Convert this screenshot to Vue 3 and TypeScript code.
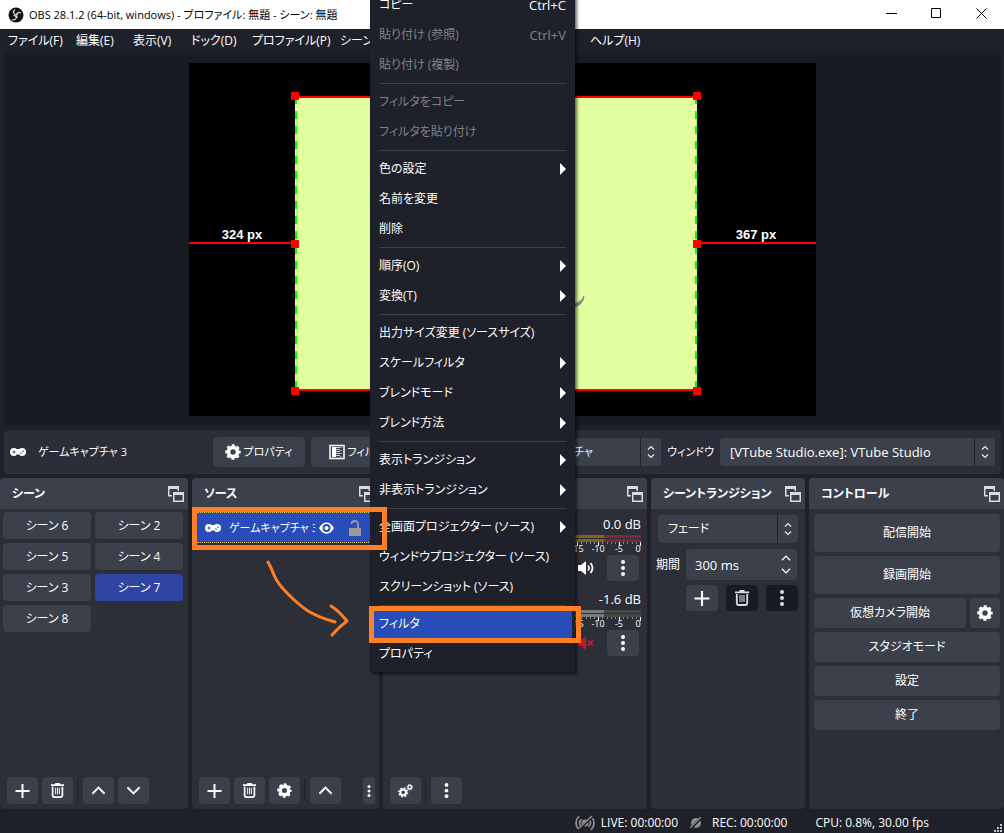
<script setup lang="ts">
import { ref } from 'vue'

interface MenuEntry {
  label?: string
  shortcut?: string
  disabled?: boolean
  submenu?: boolean
  active?: boolean
  separator?: boolean
}

const menuBar = [
  'ファイル(F)',
  '編集(E)',
  '表示(V)',
  'ドック(D)',
  'プロファイル(P)',
  'シーンコレクション(S)',
  'ツール(T)',
  'ヘルプ(H)',
]

const contextMenu: MenuEntry[] = [
  { label: 'コピー', shortcut: 'Ctrl+C' },
  { label: '貼り付け (参照)', shortcut: 'Ctrl+V', disabled: true },
  { label: '貼り付け (複製)', disabled: true },
  { separator: true },
  { label: 'フィルタをコピー', disabled: true },
  { label: 'フィルタを貼り付け', disabled: true },
  { separator: true },
  { label: '色の設定', submenu: true },
  { label: '名前を変更' },
  { label: '削除' },
  { separator: true },
  { label: '順序(O)', submenu: true },
  { label: '変換(T)', submenu: true },
  { separator: true },
  { label: '出力サイズ変更 (ソースサイズ)' },
  { label: 'スケールフィルタ', submenu: true },
  { label: 'ブレンドモード', submenu: true },
  { label: 'ブレンド方法', submenu: true },
  { separator: true },
  { label: '表示トランジション', submenu: true },
  { label: '非表示トランジション', submenu: true },
  { separator: true },
  { label: '全画面プロジェクター (ソース)', submenu: true },
  { label: 'ウィンドウプロジェクター (ソース)' },
  { label: 'スクリーンショット (ソース)' },
  { separator: true },
  { label: 'フィルタ', active: true },
  { label: 'プロパティ' },
]

const scenes = ['シーン 6', 'シーン 2', 'シーン 5', 'シーン 4', 'シーン 3', 'シーン 7', 'シーン 8']
const currentScene = ref('シーン 7')

const channels = [
  { level: '0.0 dB', muted: false },
  { level: '-1.6 dB', muted: true },
]

const meterWidth = 251
const decibels = Array.from({ length: 61 }, (_, i) => ({
  value: -i,
  x: Math.round(meterWidth - 1 - (i * meterWidth) / 60),
  major: i % 5 === 0,
}))
const majors = decibels.filter((d) => d.major)

const duration = ref('300 ms')
</script>

<template>
  <svg class="sprite" aria-hidden="true">
    <symbol id="i-float" viewBox="0 0 16 16">
      <path d="M0 0h11v5H9.500V3H1.500v6H4v1.500H0z" fill="#dcdce0" />
      <path d="M5 6h11v10H5zM6.500 9v5.500h8V9z" fill="#dcdce0" fill-rule="evenodd" />
    </symbol>
    <symbol id="i-pad" viewBox="0 0 16 8">
      <path d="M4 0Q6 0 6.500 1h3Q10 0 12 0a4 4 0 0 1 0 8Q10 8 9.300 6.500H6.700Q6 8 4 8a4 4 0 0 1 0-8z" fill="#fff" />
      <path d="M4 2.500v3M2.500 4h3" stroke="#4a4c58" stroke-width="1" />
      <circle cx="11" cy="5" r=".8" fill="#4a4c58" /><circle cx="13" cy="3.200" r=".8" fill="#4a4c58" />
    </symbol>
    <symbol id="i-gear" viewBox="0 0 16 16">
      <circle cx="8" cy="8" r="4.500" fill="none" stroke="currentColor" stroke-width="3.600" />
      <circle cx="8" cy="8" r="6.800" fill="none" stroke="currentColor" stroke-width="1.800" stroke-dasharray="3.200 2.141" stroke-dashoffset="1.600" />
    </symbol>
    <symbol id="i-plus" viewBox="0 0 15 15">
      <path d="M7.500 1v14M.5 8h14" stroke="currentColor" stroke-width="2" />
    </symbol>
    <symbol id="i-trash" viewBox="0 0 16 16">
      <path d="M5.500 1h5M1 2.300h14" fill="none" stroke="currentColor" stroke-width="1.800" />
      <path d="M2.800 4v9q0 2 2 2h6.400q2 0 2-2V4" fill="none" stroke="currentColor" stroke-width="1.800" />
      <path d="M6 5v7M8 5v7M10 5v7" stroke="currentColor" stroke-width="1" />
    </symbol>
    <symbol id="i-up" viewBox="0 0 16 16">
      <path d="M1.500 11.500L8 5l6.500 6.500" fill="none" stroke="currentColor" stroke-width="2" />
    </symbol>
    <symbol id="i-down" viewBox="0 0 16 16">
      <path d="M1.500 4.500L8 11l6.500-6.500" fill="none" stroke="currentColor" stroke-width="2" />
    </symbol>
    <symbol id="i-dots" viewBox="0 0 4 16">
      <circle cx="2" cy="2" r="2" fill="currentColor" /><circle cx="2" cy="8" r="2" fill="currentColor" /><circle cx="2" cy="14" r="2" fill="currentColor" />
    </symbol>
    <symbol id="i-gears" viewBox="0 0 16 16">
      <circle cx="5.500" cy="10" r="3" fill="none" stroke="currentColor" stroke-width="2.200" />
      <circle cx="5.500" cy="10" r="4.700" fill="none" stroke="currentColor" stroke-width="1.500" stroke-dasharray="1.900 1.790" />
      <circle cx="12.500" cy="4.500" r="1.900" fill="none" stroke="currentColor" stroke-width="1.400" />
      <circle cx="12.500" cy="4.500" r="3" fill="none" stroke="currentColor" stroke-width="1" stroke-dasharray="1.200 1.156" />
    </symbol>
    <symbol id="i-spin" viewBox="0 0 8 14">
      <path d="M1 4.500L4 1.500l3 3M1 9.500l3 3 3-3" fill="none" stroke="#e8e8ec" stroke-width="1.200" />
    </symbol>
  </svg>

  <div class="app">
    <header class="titlebar">
      <svg class="logo" viewBox="0 0 16 16" aria-hidden="true">
        <circle cx="8" cy="8" r="7.500" fill="#111" />
        <path d="M7 2.500Q4.500 4.500 6 6.500t4 .5M13 6q-2.500-1.500-4 .5t.5 4M4 12.500q3 1 4-1T5.500 8" fill="none" stroke="#d8d8d8" stroke-width="1.200" />
      </svg>
      <h1>OBS 28.1.2 (64-bit, windows) - プロファイル: 無題 - シーン: 無題</h1>
      <div class="window-buttons">
        <button aria-label="最小化"><svg viewBox="0 0 11 11"><path d="M0 5.500h11" stroke="#000" /></svg></button>
        <button aria-label="最大化"><svg viewBox="0 0 11 11"><path d="M.5 .5h9v9h-9z" fill="none" stroke="#000" /></svg></button>
        <button aria-label="閉じる"><svg viewBox="0 0 11 11"><path d="M.5 .5l10 10M10.500 .5l-10 10" stroke="#000" /></svg></button>
      </div>
    </header>

    <nav class="menubar">
      <button v-for="m in menuBar" :key="m">{{ m }}</button>
    </nav>

    <main class="preview">
      <svg class="canvas" viewBox="0 0 627 353">
        <rect width="627" height="353" fill="#000" />
        <rect x="106" y="33" width="402" height="295" fill="#e2ff9f" />
        <path d="M384 241q8-1 11-8-1 10-11 11z" fill="#8d8d96" stroke="#55555f" stroke-width=".5" />
        <path d="M107 33v295M507 33v295" stroke="#0f0" stroke-width="2" stroke-dasharray="8 7" />
        <path d="M106 34h402M106 327h402M0 180h106M508 180h119" stroke="#f00" stroke-width="2" />
        <path d="M102 29h8v8h-8zM102 177h8v8h-8zM102 324h8v8h-8zM504 29h8v8h-8zM504 177h8v8h-8zM504 324h8v8h-8z" fill="#f00" />
        <text x="53" y="176">324 px</text>
        <text x="567" y="176">367 px</text>
      </svg>
    </main>

    <section class="source-bar">
      <svg class="pad"><use href="#i-pad" /></svg>
      <span class="source-name">ゲームキャプチャ 3</span>
      <button class="btn tool"><svg class="ic"><use href="#i-gear" /></svg>プロパティ</button>
      <button class="btn tool">
        <svg class="ic" viewBox="0 0 16 16">
          <path d="M1 1.500h14v13H1z" fill="none" stroke="#fff" stroke-width="1.500" />
          <path d="M3 3h4v10H3z" fill="#fff" />
          <path d="M8 3v10M10 3v10" stroke="#fff" stroke-width="1.500" stroke-dasharray="1 1" />
          <path d="M12 3v10" stroke="#fff" stroke-width="1" stroke-dasharray="1 2" />
        </svg>フィルタ
      </button>
      <div class="field mode">
        <span class="select">
          <select aria-label="モード"><option>特定のウィンドウをキャプチャ</option></select>
          <svg><use href="#i-spin" /></svg>
        </span>
      </div>
      <div class="field window">
        <label for="window">ウィンドウ</label>
        <span class="select">
          <select id="window"><option>[VTube Studio.exe]: VTube Studio</option></select>
          <svg><use href="#i-spin" /></svg>
        </span>
      </div>
    </section>

    <div class="docks">
      <section class="dock">
        <header><h2>シーン</h2><svg><use href="#i-float" /></svg></header>
        <div class="scene-grid">
          <button v-for="s in scenes" :key="s" class="btn" :class="{ current: s === currentScene }" @click="currentScene = s">{{ s }}</button>
        </div>
        <footer>
          <button class="btn" aria-label="追加"><svg><use href="#i-plus" /></svg></button>
          <button class="btn" aria-label="削除"><svg><use href="#i-trash" /></svg></button>
          <i></i>
          <button class="btn" aria-label="上へ"><svg><use href="#i-up" /></svg></button>
          <button class="btn" aria-label="下へ"><svg><use href="#i-down" /></svg></button>
        </footer>
      </section>

      <section class="dock">
        <header><h2>ソース</h2><svg><use href="#i-float" /></svg></header>
        <div class="source-row">
          <svg class="pad"><use href="#i-pad" /></svg>
          <span>ゲームキャプチャ 3</span>
          <svg class="eye" viewBox="0 0 16 12"><path d="M0 6Q3 0 8 0t8 6q-3 6-8 6T0 6z" fill="#fff" /><circle cx="8" cy="6" r="3.200" fill="none" stroke="#284cb8" stroke-width="2" /></svg>
          <svg class="lock" viewBox="0 0 12 16"><path d="M0 8h12v8H0z" fill="#9a9a9a" /><path d="M2.500 4V3.500Q3 1 5.800 1T9 4v5" fill="none" stroke="#9a9a9a" stroke-width="1.800" /></svg>
        </div>
        <footer>
          <button class="btn" aria-label="追加"><svg><use href="#i-plus" /></svg></button>
          <button class="btn" aria-label="削除"><svg><use href="#i-trash" /></svg></button>
          <button class="btn" aria-label="プロパティ"><svg><use href="#i-gear" /></svg></button>
          <i></i>
          <button class="btn" aria-label="上へ"><svg><use href="#i-up" /></svg></button>
          <button class="btn slim" aria-label="その他"><svg><use href="#i-dots" /></svg></button>
        </footer>
      </section>

      <section class="dock">
        <header><h2></h2><svg><use href="#i-float" /></svg></header>
        <div class="mixer">
          <div v-for="c in channels" :key="c.level" class="channel">
            <output>{{ c.level }}</output>
            <svg class="meter" :class="{ muted: c.muted }" viewBox="0 0 251 20" preserveAspectRatio="xMaxYMin slice">
              <path class="low" d="M0 1.500h167M0 5.500h167" />
              <path class="mid" d="M167 1.500h47M167 5.500h47" />
              <path class="high" d="M214 1.500h37M214 5.500h37" />
              <rect v-for="d in decibels" :key="d.value" :x="d.x" y="7" width="1" :height="d.major ? 4 : 2" :fill="d.major ? '#fff' : '#85868c'" />
              <text v-for="d in majors" :key="d.value" :x="d.value === 0 ? 248 : d.x" y="17">{{ d.value }}</text>
            </svg>
            <div class="channel-tools">
              <button class="mute" :aria-label="c.muted ? 'ミュート解除' : 'ミュート'">
                <svg viewBox="0 0 18 16">
                  <path d="M1 5h3l5-4v14l-5-4H1z" :fill="c.muted ? '#c01c28' : '#fff'" />
                  <path v-if="!c.muted" d="M11 5.500q2 2.500 0 5M13.500 3q4 5 0 10" fill="none" stroke="#fff" stroke-width="1.800" />
                  <path v-else d="M11 5.500l5 5M16 5.500l-5 5" stroke="#c01c28" stroke-width="2" />
                </svg>
              </button>
              <button class="btn more" aria-label="設定"><svg><use href="#i-dots" /></svg></button>
            </div>
          </div>
        </div>
        <footer>
          <button class="btn" aria-label="詳細"><svg><use href="#i-gears" /></svg></button>
          <i></i>
          <button class="btn" aria-label="その他"><svg><use href="#i-dots" /></svg></button>
        </footer>
      </section>

      <section class="dock">
        <header><h2>シーントランジション</h2><svg><use href="#i-float" /></svg></header>
        <div class="transition">
          <span class="select">
            <select aria-label="トランジション"><option>フェード</option></select>
            <svg><use href="#i-spin" /></svg>
          </span>
          <div class="duration">
            <label for="duration">期間</label>
            <div class="spin">
              <input id="duration" v-model="duration" type="text" />
              <span>
                <button aria-label="増やす"><svg><use href="#i-up" /></svg></button>
                <button aria-label="減らす"><svg><use href="#i-down" /></svg></button>
              </span>
            </div>
          </div>
          <div class="transition-tools">
            <button class="btn" aria-label="追加"><svg><use href="#i-plus" /></svg></button>
            <button class="btn dark" aria-label="削除"><svg><use href="#i-trash" /></svg></button>
            <button class="btn dark" aria-label="その他"><svg><use href="#i-dots" /></svg></button>
          </div>
        </div>
      </section>

      <section class="dock">
        <header><h2>コントロール</h2><svg><use href="#i-float" /></svg></header>
        <div class="controls">
          <button class="btn tall">配信開始</button>
          <button class="btn tall">録画開始</button>
          <div class="pair">
            <button class="btn">仮想カメラ開始</button>
            <button class="btn cog" aria-label="仮想カメラ設定"><svg class="ic"><use href="#i-gear" /></svg></button>
          </div>
          <button class="btn">スタジオモード</button>
          <button class="btn">設定</button>
          <button class="btn">終了</button>
        </div>
      </section>
    </div>

    <footer class="status">
      <span>
        <svg class="live" viewBox="0 0 20 16" aria-hidden="true">
          <path d="M4 1q-6 7 0 14M16 1q6 7 0 14M6.500 4q-4 4 0 8M13.500 4q4 4 0 8" fill="none" stroke="#8f8f8c" stroke-width="1.700" />
          <circle cx="10" cy="8" r="3.500" fill="#8f8f8c" />
          <path d="M3 15L18 1" stroke="#1f212a" stroke-width="3" /><path d="M3 14L17 1" stroke="#8f8f8c" stroke-width="1.500" />
        </svg>LIVE: 00:00:00
      </span>
      <span>
        <svg class="rec" viewBox="0 0 12 12" aria-hidden="true">
          <circle cx="6" cy="6" r="5" fill="#8f8f8c" />
          <path d="M0 12L12 0" stroke="#1f212a" stroke-width="3" /><path d="M0 11L11 0" stroke="#8f8f8c" stroke-width="1.300" />
        </svg>REC: 00:00:00
      </span>
      <span>CPU: 0.8%, 30.00 fps</span>
      <svg class="grip" viewBox="0 0 8 8" aria-hidden="true"><path d="M6 0h2v2H6zM3 3h2v2H3zM6 3h2v2H6zM0 6h2v2H0zM3 6h2v2H3zM6 6h2v2H6z" fill="#c8c8c8" /></svg>
    </footer>

    <div class="context-menu" role="menu">
      <template v-for="(e, i) in contextMenu" :key="i">
        <hr v-if="e.separator" />
        <button v-else role="menuitem" :disabled="e.disabled" :class="{ active: e.active }">
          {{ e.label }}
          <span v-if="e.shortcut">{{ e.shortcut }}</span>
          <svg v-if="e.submenu" viewBox="0 0 6 12"><path d="M0 0l6 6-6 6z" fill="#fff" /></svg>
        </button>
      </template>
    </div>

    <div class="mark mark-source"></div>
    <div class="mark mark-filter"></div>
    <svg class="arrow" viewBox="0 0 90 84" aria-hidden="true">
      <path d="M6 6Q9 11 12 19T26 38T46 55Q58 62 73 66M69 50Q77 55 85 65Q77 71 70 79" fill="none" stroke="#ff7f27" stroke-width="3" stroke-linecap="round" stroke-linejoin="round" />
    </svg>
  </div>
</template>

<style>
html,
body {
  background: #1f212a;
}
</style>

<style scoped>
.sprite {
  position: absolute;
  width: 0;
  height: 0;
}
.app {
  position: relative;
  display: flex;
  flex-direction: column;
  height: 100vh;
  overflow: hidden;
  background: #1f212a;
  color: #fff;
  font: 12px/18px "Open Sans", "Noto Sans CJK JP", sans-serif;
  font-feature-settings: "palt";
}
button,
select,
input {
  font: inherit;
  font-feature-settings: inherit;
  color: inherit;
  border: 0;
  padding: 0;
  margin: 0;
  background: none;
  white-space: nowrap;
}
h1,
h2 {
  margin: 0;
  font-size: 12px;
  white-space: nowrap;
}
.titlebar {
  display: flex;
  align-items: center;
  height: 29px;
  padding-left: 8px;
  background: #fff;
  color: #000;
}
.titlebar h1 {
  flex: 1;
  font-size: 11px;
  font-weight: 400;
}
.logo {
  width: 16px;
  height: 16px;
  margin-right: 5px;
}
.window-buttons {
  display: flex;
  padding-bottom: 2px;
}
.window-buttons button {
  width: 45px;
  height: 27px;
}
.window-buttons svg {
  display: block;
  width: 11px;
  height: 11px;
  margin: auto;
}
.menubar {
  display: grid;
  grid-template-columns: 68px 57px 58px 61px 88px 158px 92px auto;
  justify-content: start;
  height: 24px;
  padding-left: 8px;
}
.menubar button {
  text-align: left;
}
.preview {
  flex: 1;
  min-height: 0;
  box-sizing: border-box;
  margin: 0 3px 4px 4px;
  padding: 10px 0;
  border-radius: 4px;
  background: #181a24;
}
.canvas {
  display: block;
  width: 100%;
  height: 100%;
}
.canvas text {
  fill: #fff;
  font: bold 13px "Liberation Sans", sans-serif;
  text-anchor: middle;
}
.btn {
  display: flex;
  align-items: center;
  justify-content: center;
  border-radius: 4px;
  background: #3c404b;
}
.ic {
  width: 16px;
  height: 16px;
}
.pad {
  width: 16px;
  height: 8px;
  flex: none;
}
.source-bar {
  display: flex;
  align-items: center;
  height: 44px;
  margin: 0 3px 4px 4px;
  padding: 0 6px;
  border-radius: 4px;
  background: #2b2d38;
  font-size: 11px;
}
.source-name {
  width: 175px;
  margin-left: 12px;
}
.tool {
  width: 92px;
  height: 30px;
  margin-right: 6px;
  gap: 2px;
}
.field {
  display: flex;
  align-items: center;
  white-space: nowrap;
}
.mode {
  flex: 1;
  margin: 0 6px 0 36px;
}
.window {
  flex: none;
  gap: 6px;
}
.window .select {
  width: 275px;
  font-size: 13px;
}
.select {
  display: flex;
  align-items: center;
  position: relative;
  flex: 1;
  height: 28px;
  border-radius: 4px;
  background: linear-gradient(#1f212a, #1f212a) right 20px top / 1px 100% no-repeat #3c404b;
}
.select select {
  appearance: none;
  flex: 1;
  min-width: 0;
  height: 28px;
  padding: 0 24px 0 10px;
}
.select svg {
  position: absolute;
  right: 6px;
  width: 8px;
  height: 14px;
  pointer-events: none;
}
.docks {
  display: grid;
  grid-template-columns: 188fr 187fr 264fr 154fr 195fr;
  gap: 4px;
}
.dock {
  display: flex;
  flex-direction: column;
  min-width: 0;
  min-height: 331px;
  border-radius: 4px;
  background: #2c2e38;
}
.dock > header {
  display: flex;
  align-items: center;
  justify-content: space-between;
  height: 31px;
  padding: 0 4px 0 12px;
  border-radius: 4px 4px 0 0;
  background: #3c404b;
}
.dock > header svg {
  width: 16px;
  height: 16px;
  flex: none;
}
.dock > footer {
  display: flex;
  gap: 4px;
  margin-top: auto;
  padding: 0 4px 5px 7px;
}
.dock > footer .btn {
  width: 31px;
  height: 27px;
}
.dock > footer svg {
  width: 15px;
  height: 15px;
}
.dock > footer i {
  width: 1px;
  height: 21px;
  margin: 3px 1px 0 0;
  background: #1f212a;
}
.dock > footer .slim {
  width: 12px;
  margin-left: auto;
}
.dock > footer .slim svg {
  height: 12px;
}
.scene-grid {
  display: grid;
  grid-template-columns: 1fr 1fr;
  gap: 4px;
  padding: 3px 5px 0 3px;
}
.scene-grid .btn {
  height: 27px;
}
.scene-grid .current {
  background: #3045a3;
}
.source-row {
  display: flex;
  align-items: center;
  margin: 3px 4px 0 5px;
  height: 29px;
  padding: 0 14px 0 8px;
  border: dotted #d5bf55;
  border-width: 1px 0;
  background: #284cb8;
  font-size: 11px;
}
.source-row span {
  width: 86px;
  margin: 0 4px 0 8px;
  overflow: hidden;
  white-space: nowrap;
}
.eye {
  width: 15px;
  height: 12px;
  flex: none;
}
.lock {
  width: 12px;
  height: 16px;
  margin-left: 15px;
  flex: none;
}
.mixer {
  padding: 6px 6px 0 7px;
}
.channel {
  height: 75px;
}
.channel output {
  display: block;
  font-size: 13px;
  text-align: right;
}
.meter {
  display: block;
  width: 100%;
  height: 20px;
  margin-top: 2px;
}
.meter path {
  fill: none;
  stroke-width: 3px;
}
.meter .low {
  stroke: #2b6a2e;
}
.meter .mid {
  stroke: #80631f;
}
.meter .high {
  stroke: #7c2937;
}
.meter.muted .low,
.meter.muted .mid {
  stroke: #7a7a7a;
}
.meter.muted .high {
  stroke: #484848;
}
.meter text {
  fill: #fff;
  font-size: 9px;
  text-anchor: middle;
}
.channel-tools {
  display: flex;
  justify-content: flex-end;
  align-items: center;
  gap: 12px;
  padding-right: 2px;
}
.mute svg {
  display: block;
  width: 18px;
  height: 16px;
}
.more,
.transition-tools .btn {
  width: 32px;
  height: 26px;
}
.more svg,
.transition-tools svg {
  width: 16px;
  height: 16px;
}
.transition {
  padding: 6px 7px 0 5px;
}
.transition .select {
  margin-left: 2px;
}
.duration {
  display: flex;
  align-items: center;
  justify-content: space-between;
  margin: 6px 1px 5px 0;
}
.spin {
  display: flex;
  width: 111px;
  height: 31px;
  border-radius: 4px;
  background: #3c404b;
}
.spin input {
  flex: 1;
  min-width: 0;
  padding-left: 9px;
  font-size: 13px;
}
.spin span {
  display: flex;
  flex-direction: column;
  padding: 2px 6px 2px 0;
}
.spin button {
  flex: 1;
}
.spin svg {
  display: block;
  width: 10px;
  height: 10px;
}
.transition-tools {
  display: flex;
  justify-content: flex-end;
  gap: 8px;
}
.dark {
  background: #181a24;
  color: #dadbe8;
}
.controls {
  display: flex;
  flex-direction: column;
  gap: 4px;
  padding: 5px 4px 0 5px;
}
.controls .btn {
  flex: 1 0 auto;
  height: 30px;
}
.controls .tall {
  height: 38px;
}
.pair {
  display: flex;
  gap: 4px;
}
.controls .pair .cog {
  flex: none;
  width: 30px;
}
.status {
  display: flex;
  justify-content: flex-end;
  align-items: center;
  gap: 12px;
  height: 24px;
  padding-right: 75px;
  padding-top: 3px;
  box-sizing: border-box;
}
.status span {
  display: flex;
  align-items: center;
  white-space: nowrap;
}
.status span:nth-child(3) {
  margin-left: 16px;
}
.live {
  width: 20px;
  height: 16px;
  margin-right: 6px;
}
.rec {
  width: 12px;
  height: 12px;
  margin-right: 10px;
}
.grip {
  position: absolute;
  right: 2px;
  bottom: 1px;
  width: 8px;
  height: 8px;
}
.context-menu {
  position: absolute;
  left: 370px;
  top: -10px;
  width: 205px;
  padding-bottom: 3px;
  background: #1f212a;
  box-shadow: 2px 2px 3px rgba(0, 0, 0, 0.6);
}
.context-menu button {
  display: flex;
  align-items: center;
  width: 202px;
  height: 30px;
  padding: 0 6px 0 9px;
}
.context-menu button:disabled {
  color: #808185;
}
.context-menu .active {
  border-radius: 4px;
  background: #284cb8;
}
.context-menu button span {
  margin-left: auto;
  font-size: 13px;
}
.context-menu button svg {
  width: 6px;
  height: 12px;
  margin-left: auto;
}
.context-menu hr {
  height: 1px;
  margin: 3px 9px;
  border: 0;
  background: #3c404b;
}
.mark {
  position: absolute;
  box-sizing: border-box;
  border: 5px solid #ff7f27;
  pointer-events: none;
}
.mark-source {
  left: 192px;
  top: 507px;
  width: 195px;
  height: 43px;
}
.mark-filter {
  left: 369px;
  top: 606px;
  width: 212px;
  height: 37px;
}
.arrow {
  position: absolute;
  left: 262px;
  top: 556px;
  width: 90px;
  height: 84px;
  pointer-events: none;
}
</style>
